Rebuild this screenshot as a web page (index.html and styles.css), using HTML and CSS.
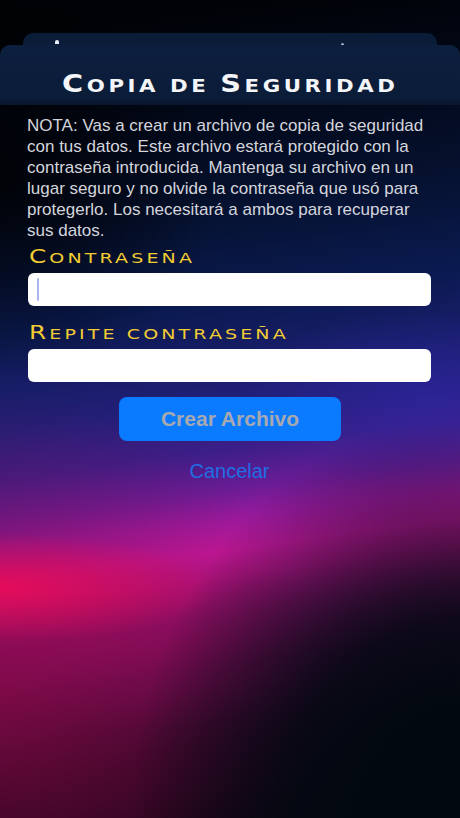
FILE: index.html
```html
<!DOCTYPE html>
<html lang="es">
<head>
<meta charset="utf-8">
<title>Copia de Seguridad</title>
<link rel="stylesheet" href="styles.css">
</head>
<body>
<div class="screen">
  <div class="header">
    <div class="header-back">
      <span class="dot dot-left"></span>
      <span class="dot dot-right"></span>
    </div>
    <div class="header-front">
      <h1 class="title"><span class="title-text"><span class="cap">C</span><span class="sc">opia de </span><span class="cap">S</span><span class="sc">eguridad</span></span></h1>
    </div>
  </div>
  <div class="content">
    <p class="note">NOTA: Vas a crear un archivo de copia de seguridad con tus datos. Este archivo estará protegido con la contraseña introducida. Mantenga su archivo en un lugar seguro y no olvide la contraseña que usó para protegerlo. Los necesitará a ambos para recuperar sus datos.</p>
    <label class="field-label label-first"><span class="label-text"><span class="cap">C</span><span class="sc">ontraseña</span></span></label>
    <div class="input"><span class="caret"></span></div>
    <label class="field-label label-second"><span class="label-text"><span class="cap">R</span><span class="sc">epite contraseña</span></span></label>
    <div class="input"></div>
    <div class="actions">
      <button class="primary">Crear Archivo</button>
      <button class="link">Cancelar</button>
    </div>
  </div>
</div>
</body>
</html>
```
FILE: styles.css
```css
html, body {
  margin: 0;
  padding: 0;
}
body {
  width: 460px;
  height: 818px;
  overflow: hidden;
  background: #000;
}
.screen {
  width: 460px;
  height: 818px;
  display: flex;
  flex-direction: column;
  background:
    radial-gradient(ellipse 220px 55px at 0px 588px, rgba(236, 12, 88, 0.9), rgba(236, 12, 88, 0) 100%),
    radial-gradient(ellipse 330px 400px at 100% 100%, rgba(1, 8, 16, 1) 25%, rgba(1, 8, 16, 0.85) 50%, rgba(1, 8, 16, 0) 100%),
    radial-gradient(ellipse 260px 90px at 110px 640px, rgba(150, 10, 90, 0.45), rgba(150, 10, 90, 0) 100%),
    radial-gradient(ellipse 320px 300px at 0px 690px, rgba(140, 8, 64, 0.65), rgba(140, 8, 64, 0) 100%),
    radial-gradient(ellipse 220px 200px at 0px 180px, rgba(0, 0, 0, 0.8), rgba(0, 0, 0, 0) 100%),
    radial-gradient(ellipse 200px 90px at 430px 400px, rgba(40, 40, 170, 0.5), rgba(40, 40, 170, 0) 100%),
    linear-gradient(172deg,
      #000205 32px,
      #020818 131px,
      #05112e 230px,
      #0a1a50 329px,
      #221f78 428px,
      #3d1e88 478px,
      #6a1c95 517px,
      #9c1a9e 547px,
      #c2189c 577px,
      #b5158a 602px,
      #84126c 640px,
      #520d4a 690px,
      #2c0828 765px,
      #180418 842px);
}
.header {
  padding-top: 33px;
  display: flex;
  flex-direction: column;
}
.header-back {
  position: relative;
  height: 12px;
  margin: 0 23px;
  background: #0b1c39;
  border-radius: 10px 10px 0 0;
}
.dot {
  position: absolute;
  background: #e8ecf4;
  border-radius: 2px 2px 0 0;
}
.dot-left {
  left: 32px;
  top: 7px;
  width: 4px;
  height: 4px;
}
.dot-right {
  left: 318px;
  top: 10px;
  width: 3px;
  height: 2px;
  background: #9fb0c8;
}
.header-front {
  height: 60px;
  box-sizing: border-box;
  padding-top: 24px;
  background: linear-gradient(180deg, #0c1f3e 0%, #0b1c38 90%, #08152a 100%);
  border-radius: 10px 10px 0 0;
  display: flex;
  align-items: flex-start;
  justify-content: center;
}
.title {
  margin: 0;
  font-family: "DejaVu Sans", sans-serif;
  font-weight: bold;
  font-size: 25px;
  color: #f4f5f8;
  line-height: 30px;
  height: 30px;
}
.title-text {
  display: inline-block;
  letter-spacing: 3.1px;
  transform: scaleX(1.15);
  transform-origin: center;
}
.title .sc {
  font-size: 0.74em;
  text-transform: uppercase;
}
.content {
  display: flex;
  flex-direction: column;
  padding: 0 29px 0 28px;
}
.note {
  margin: 10px 0 0 -1px;
  font-family: "Liberation Sans", Arial, sans-serif;
  font-size: 17px;
  line-height: 21px;
  color: #d4d5dc;
}
.field-label {
  display: block;
  height: 22px;
  font-family: "DejaVu Sans", sans-serif;
  font-size: 19px;
  line-height: 22px;
  color: #f2cc33;
  margin-left: 1px;
}
.label-text {
  display: inline-block;
  vertical-align: top;
  letter-spacing: 2.4px;
  transform: scaleX(1.3);
  transform-origin: left center;
}
.field-label .sc {
  font-size: 0.77em;
  text-transform: uppercase;
  line-height: 1;
}
.label-first {
  margin-top: 4px;
  margin-bottom: 6px;
}
.label-second {
  margin-top: 15px;
  margin-bottom: 6px;
}
.input {
  height: 33px;
  background: #ffffff;
  border-radius: 6px;
  display: flex;
  align-items: center;
  padding-left: 9px;
}
.caret {
  width: 2px;
  height: 23px;
  background: #a9b7ef;
  border-radius: 1px;
}
.actions {
  display: flex;
  flex-direction: column;
  align-items: center;
  margin-top: 15px;
}
.primary {
  width: 222px;
  height: 44px;
  margin-left: 1px;
  border: none;
  border-radius: 8px;
  background: #0a7bff;
  color: #a8a9b0;
  font-family: "Liberation Sans", Arial, sans-serif;
  font-weight: bold;
  font-size: 21px;
  padding: 0;
}
.link {
  margin-top: 18px;
  border: none;
  background: none;
  padding: 0;
  color: #1d6fe4;
  font-family: "Liberation Sans", Arial, sans-serif;
  font-size: 20px;
  line-height: 24px;
}
```
